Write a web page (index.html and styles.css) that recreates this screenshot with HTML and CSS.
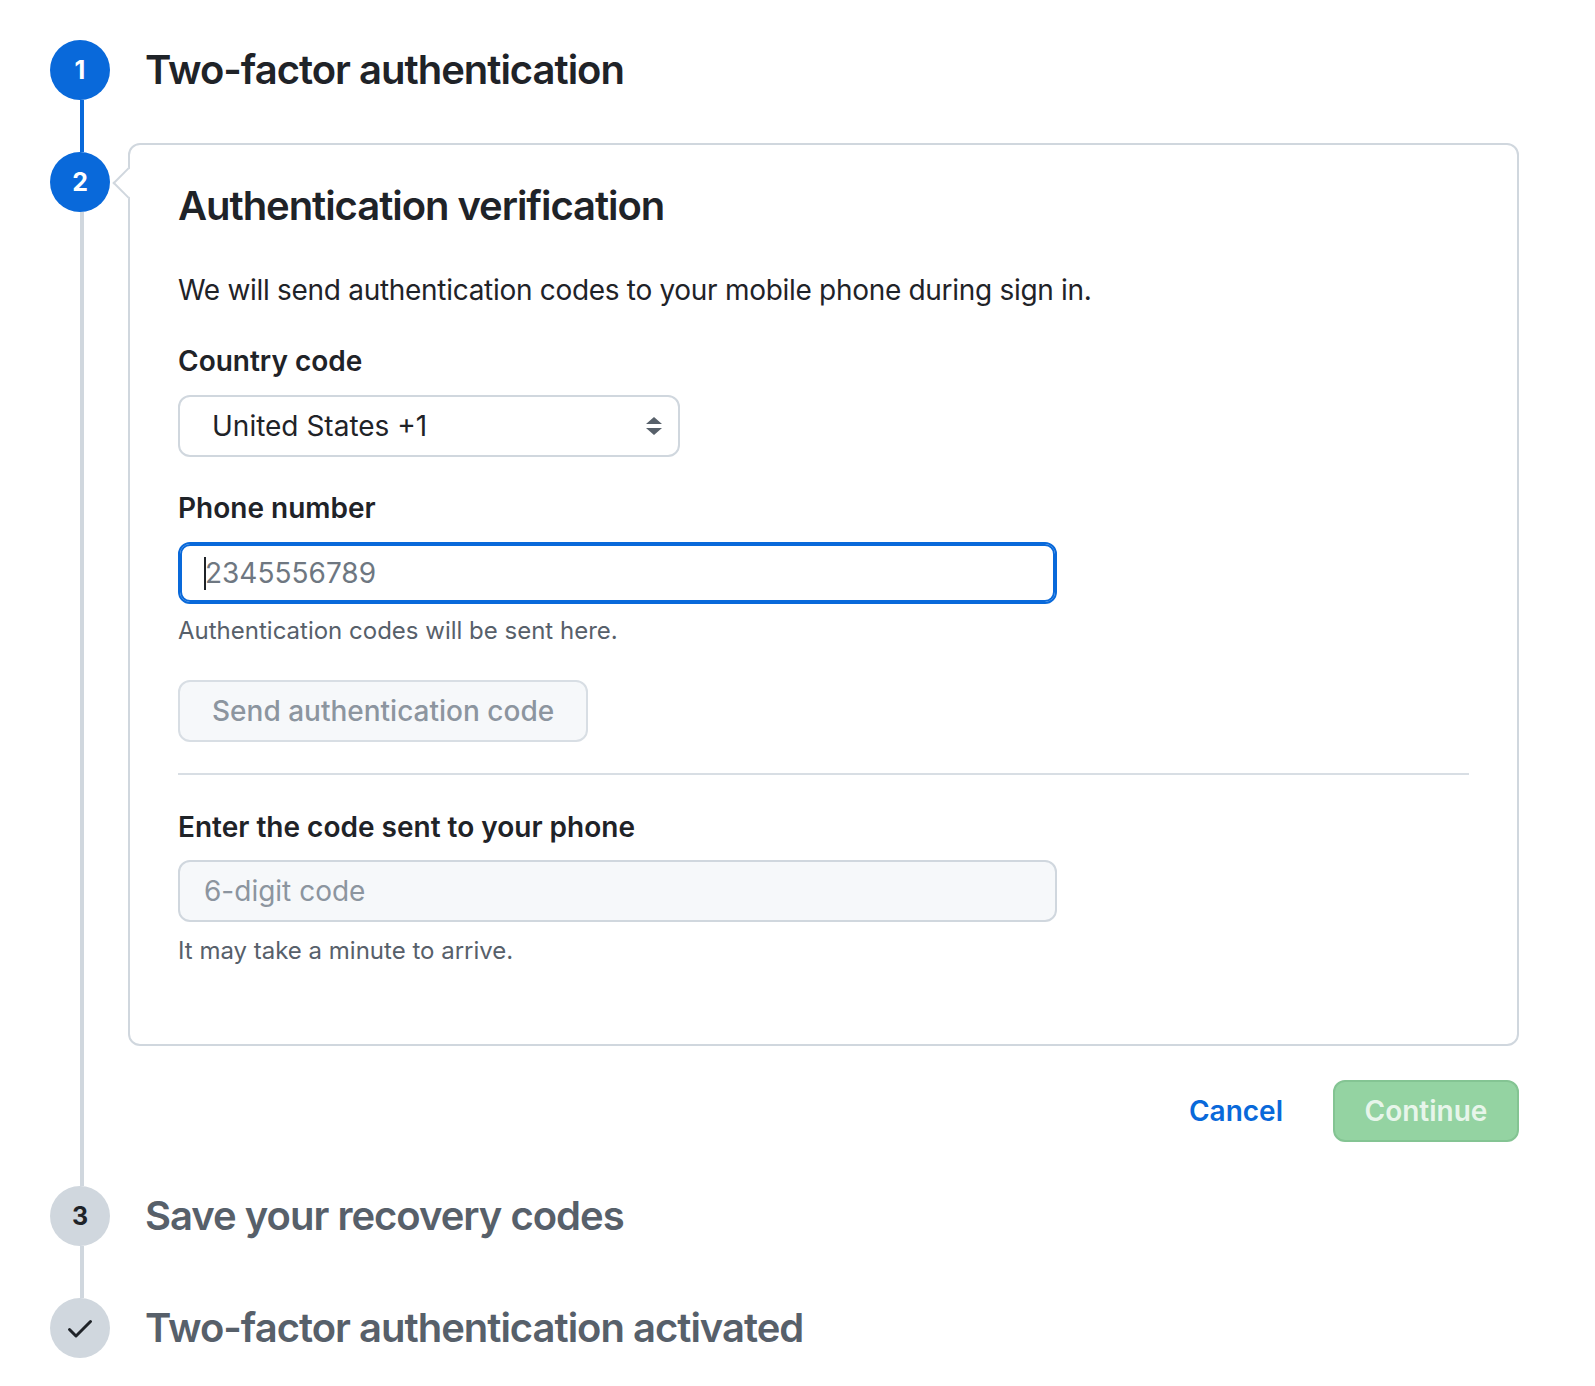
FILE: index.html
```html
<!DOCTYPE html>
<html lang="en">
<head>
<meta charset="utf-8">
<title>Two-factor authentication</title>
<link rel="stylesheet" href="styles.css">
</head>
<body>
<div class="steps">
  <div class="step">
    <div class="rail">
      <div class="circle active">1</div>
      <div class="line blue"></div>
    </div>
    <div class="step-body">
      <h2 class="step-title">Two-factor authentication</h2>
    </div>
  </div>

  <div class="step">
    <div class="rail">
      <div class="seg blue"></div>
      <div class="circle active">2</div>
      <div class="line grey"></div>
    </div>
    <div class="step-body boxed">
      <div class="box">
        <h2 class="box-title">Authentication verification</h2>
        <p class="intro">We will send authentication codes to your mobile phone during sign in.</p>

        <div class="field first">
          <div class="label">Country code</div>
          <div class="select">
            <span>United States +1</span>
            <svg class="arrows" width="16" height="18" viewBox="0 0 16 18"><path d="M8 0 L16 7 H0 Z M0 11 H16 L8 18 Z" fill="#57606a"/></svg>
          </div>
        </div>

        <div class="field">
          <div class="label">Phone number</div>
          <div class="input focus"><span class="caret"></span><span class="ph">2345556789</span></div>
          <div class="note">Authentication codes will be sent here.</div>
        </div>

        <div class="btn-send">Send authentication code</div>

        <hr class="divider">

        <div class="field">
          <div class="label">Enter the code sent to your phone</div>
          <div class="input disabled"><span class="ph light">6-digit code</span></div>
          <div class="note">It may take a minute to arrive.</div>
        </div>
      </div>

      <div class="actions">
        <a class="cancel">Cancel</a>
        <div class="btn-continue">Continue</div>
      </div>
    </div>
  </div>

  <div class="step">
    <div class="rail">
      <div class="circle pending">3</div>
      <div class="line grey short"></div>
    </div>
    <div class="step-body">
      <h2 class="step-title muted">Save your recovery codes</h2>
    </div>
  </div>

  <div class="step">
    <div class="rail">
      <div class="circle pending">
        <svg width="32" height="32" viewBox="0 0 16 16"><path fill="#1f2328" d="M13.780 4.22a.75.75 0 0 1 0 1.06l-7.25 7.25a.75.75 0 0 1-1.06 0L2.22 9.28a.751.751 0 0 1 .018-1.042.751.751 0 0 1 1.042-.018L6 10.94l6.72-6.720a.75.75 0 0 1 1.06 0Z"/></svg>
      </div>
    </div>
    <div class="step-body">
      <h2 class="step-title muted">Two-factor authentication activated</h2>
    </div>
  </div>
</div>
</body>
</html>
```

FILE: styles.css
```css
* { box-sizing: border-box; }
html, body { margin: 0; background: #ffffff; }
body {
  font-family: Inter, "Noto Sans", "Liberation Sans", sans-serif;
  color: #1f2328;
}
.steps {
  width: 1519px;
  padding: 40px 0 28px 50px;
}
.step {
  display: flex;
  align-items: stretch;
}
.rail {
  width: 60px;
  flex: none;
  display: flex;
  flex-direction: column;
  align-items: center;
}
.circle {
  width: 60px;
  height: 60px;
  flex: none;
  border-radius: 50%;
  display: flex;
  align-items: center;
  justify-content: center;
  font-size: 25px;
  font-weight: 700;
}
.circle.active { background: #0969da; color: #ffffff; }
.circle.pending { background: #d0d7de; color: #1f2328; }
.line, .seg {
  width: 4px;
  margin-left: 3px;
}
.line { flex: 1; }
.seg { height: 9px; flex: none; }
.blue { background: #0969da; }
.grey { background: #d0d7de; }
.step:first-child .step-body { height: 103px; }
.step-body {
  flex: 1;
  min-width: 0;
  padding-left: 35px;
}
.step-body.boxed {
  padding-left: 18px;
  padding-bottom: 44px;
}
.step-title {
  margin: 0;
  font-size: 40px;
  line-height: 60px;
  font-weight: 600;
  letter-spacing: -1px;
}
.step:nth-child(3) .step-body { height: 112px; }
.step-title.muted { color: #57606a; }

.box {
  position: relative;
  border: 2px solid #d0d7de;
  border-radius: 12px;
  padding: 36px 48px 74px 48px;
  height: 903px;
}
.box::before {
  content: "";
  position: absolute;
  left: -13px;
  top: 27px;
  width: 20px;
  height: 20px;
  background: #ffffff;
  border-left: 2px solid #d0d7de;
  border-bottom: 2px solid #d0d7de;
  transform: rotate(45deg);
}
.box-title {
  margin: 0 0 38px;
  font-size: 40px;
  line-height: 50px;
  font-weight: 600;
  letter-spacing: -1.05px;
}
.intro {
  margin: 0;
  font-size: 28px;
  line-height: 42px;
  letter-spacing: -0.3px;
}
.field { margin-top: 30px; }
.field.first { margin-top: 29px; }
.label {
  font-size: 28px;
  line-height: 42px;
  font-weight: 600;
  margin-bottom: 13px;
}
.select {
  width: 502px;
  height: 62px;
  border: 2px solid #d0d7de;
  border-radius: 12px;
  padding: 0 16px 0 32px;
  display: flex;
  align-items: center;
  justify-content: space-between;
  font-size: 28px;
}
.input {
  width: 879px;
  height: 62px;
  border: 2px solid #d0d7de;
  border-radius: 12px;
  padding: 0 24px;
  display: flex;
  align-items: center;
  font-size: 28px;
}
.input.focus {
  border-color: #0969da;
  box-shadow: inset 0 0 0 2px #0969da;
}
.input.disabled { background: #f6f8fa; }
.caret {
  width: 2px;
  height: 33px;
  background: #1f2328;
  margin-right: -1px;
}
.ph { color: #6e7781; }
.ph.light { color: #8c959f; }
.note {
  margin-top: 9px;
  font-size: 24px;
  line-height: 36px;
  color: #57606a;
}
.field + .btn-send { margin-top: 31px; }
.btn-send {
  display: inline-flex;
  align-items: center;
  height: 62px;
  padding: 0 32px;
  border: 2px solid #d8dee4;
  border-radius: 12px;
  background: #f6f8fa;
  color: #8c959f;
  font-size: 28px;
  font-weight: 500;
}
.divider {
  margin: 31px 0 0;
  border: 0;
  height: 2px;
  background: #d8dee4;
}
.divider + .field { margin-top: 31px; }
.divider + .field .label { margin-bottom: 12px; }
.divider + .field .note { margin-top: 11px; }

.actions {
  display: flex;
  justify-content: flex-end;
  align-items: center;
  margin-top: 34px;
}
.cancel {
  font-size: 28px;
  font-weight: 600;
  color: #0969da;
  margin-right: 50px;
}
.btn-continue {
  display: flex;
  align-items: center;
  justify-content: center;
  width: 186px;
  height: 62px;
  border: 2px solid #84c493;
  border-radius: 12px;
  background: #94d3a2;
  color: rgba(255, 255, 255, 0.8);
  font-size: 28px;
  font-weight: 600;
}
```
